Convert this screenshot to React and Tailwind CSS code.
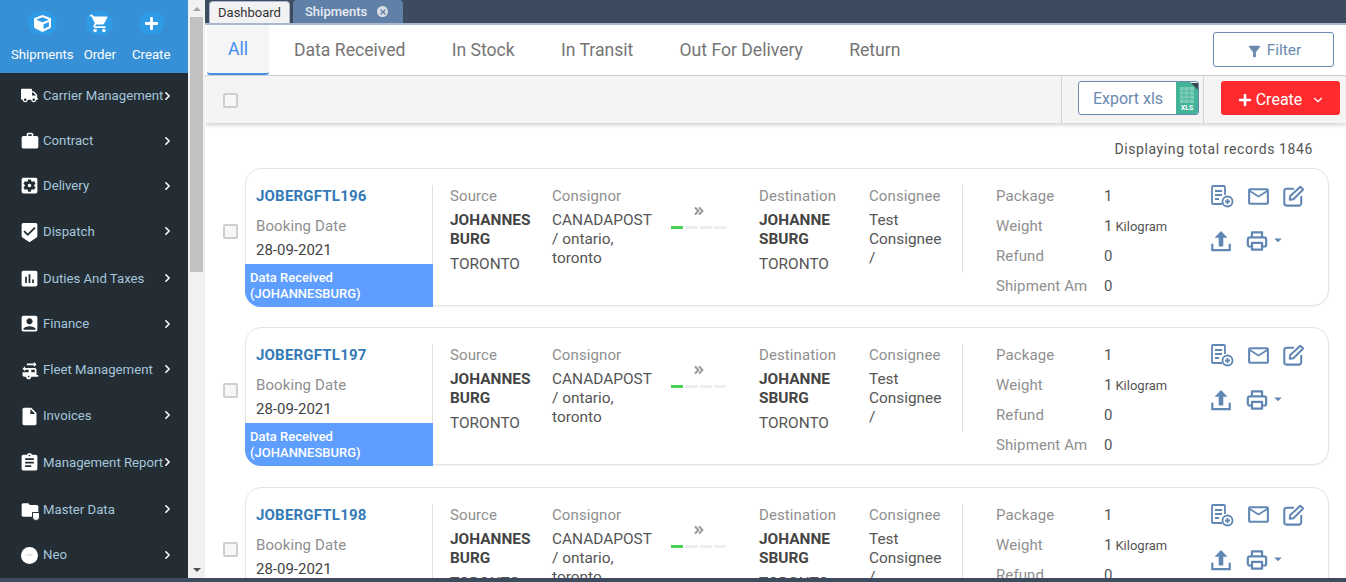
import React from "react";
import { ChevronRight, ChevronDown, ChevronsRight, X } from "lucide-react";
import {
  MdWork,
  MdSettingsApplications,
  MdAssessment,
  MdAccountBox,
  MdInsertDriveFile,
  MdAssignment,
  MdShoppingCart,
  MdMailOutline,
  MdArrowDropDown,
  MdFolder,
  MdBeenhere,
  MdRvHookup,
  MdFilterAlt,
} from "react-icons/md";
import { FaCube, FaPlus, FaTruck } from "react-icons/fa";

const menu = [
  { label: "Carrier Management", icon: <FaTruck size={17} />, h: "h-[45px]" },
  { label: "Contract", icon: <MdWork size={20} />, h: "h-[45px]" },
  { label: "Delivery", icon: <MdSettingsApplications size={21} />, h: "h-[45px]" },
  { label: "Dispatch", icon: <MdBeenhere size={21} />, h: "h-[46px] pt-[2px]" },
  { label: "Duties And Taxes", icon: <MdAssessment size={21} />, h: "h-[47px] pt-[2px]" },
  { label: "Finance", icon: <MdAccountBox size={21} />, h: "h-[45px]" },
  { label: "Fleet Management", icon: <MdRvHookup size={21} />, h: "h-[46px] pt-[2px]" },
  { label: "Invoices", icon: <MdInsertDriveFile size={21} />, h: "h-[46px] pt-[2px]" },
  { label: "Management Report", icon: <MdAssignment size={21} />, h: "h-[47px] pt-[2px]" },
  {
    label: "Master Data",
    icon: (
      <span className="relative flex">
        <MdFolder size={20} />
        <span className="absolute -bottom-[1px] right-0 h-[9px] w-[8px] rounded-b-[4px] border border-[#232d33] bg-white" />
      </span>
    ),
    h: "h-[47px] pt-[2px]",
  },
  {
    label: "Neo",
    icon: (
      <span className="flex h-[17px] w-[17px] items-center justify-center rounded-full bg-white text-[4px] text-[#cfc4cf]">
        neo
      </span>
    ),
    h: "h-[46px]",
  },
];

const tabs = ["All", "Data Received", "In Stock", "In Transit", "Out For Delivery", "Return"];

const shipments = ["JOBERGFTL196", "JOBERGFTL197", "JOBERGFTL198"];

function TopAction({ icon, label, circle }) {
  return (
    <div className="flex flex-col items-center gap-[12px]">
      <div className={`flex h-[24px] items-center justify-center rounded-full bg-[#2f9be6] text-white ${circle}`}>
        {icon}
      </div>
      <span className="text-[13.2px] leading-[16px] text-white">{label}</span>
    </div>
  );
}

function Sidebar() {
  return (
    <aside className="flex w-[188px] shrink-0 flex-col bg-[#232d33]">
      <div className="flex h-[73px] bg-[#3790d6] pl-[11px] pt-[11px]">
        <TopAction icon={<FaCube size={17} />} label="Shipments" circle="w-[29px]" />
        <div className="ml-[10px]">
          <TopAction icon={<MdShoppingCart size={21} />} label="Order" circle="w-[27px]" />
        </div>
        <div className="ml-[16px]">
          <TopAction icon={<FaPlus size={15} />} label="Create" circle="w-[25px]" />
        </div>
      </div>
      {menu.map((item) => (
        <div key={item.label} className={`relative flex items-center pl-[18px] ${item.h}`}>
          <span className="-ml-[1px] mr-[1px] flex w-[25px] justify-center text-white">{item.icon}</span>
          <span className="whitespace-nowrap text-[13.2px] text-[#a6c6dc]">{item.label}</span>
          <ChevronRight size={13} strokeWidth={3} className="absolute left-[161px] top-1/2 -translate-y-1/2 text-white" />
        </div>
      ))}
    </aside>
  );
}

function Scrollbar() {
  return (
    <div className="flex w-[17px] shrink-0 flex-col items-center bg-[#f1f1f1]">
      <div className="flex h-[17px] items-center justify-center">
        <div className="h-0 w-0 border-x-[4px] border-b-[4px] border-x-transparent border-b-[#a3a3a3]" />
      </div>
      <div className="h-[255px] w-[13px] bg-[#c1c1c1]" />
      <div className="flex-1" />
      <div className="flex h-[17px] items-center justify-center">
        <div className="h-0 w-0 border-x-[4px] border-t-[4px] border-x-transparent border-t-[#505050]" />
      </div>
    </div>
  );
}

function Checkbox() {
  return <div className="h-[15px] w-[15px] shrink-0 rounded-[2px] border-2 border-[#cfcfcf] bg-[#f7f7f7]" />;
}

function TabStrip() {
  return (
    <div className="flex h-[25px] shrink-0 items-end gap-[3px] border-b-2 border-[#a9b7d1] bg-[#3d4b5e] pl-[4px]">
      <div className="flex h-[22px] w-[81px] items-center justify-center rounded-t-[4px] border border-b-0 border-[#a9b7d1] bg-[#f2f2f2] text-[13px] text-[#333]">
        Dashboard
      </div>
      <div className="flex h-[23px] w-[110px] items-center gap-[10px] rounded-t-[4px] bg-[#6080a8] pl-[12px] text-[13px] font-medium text-[#e8edf4]">
        Shipments
        <span className="flex h-[11px] w-[11px] items-center justify-center rounded-full bg-[#d9dde3]">
          <X size={8} strokeWidth={4} className="text-[#6080a8]" />
        </span>
      </div>
    </div>
  );
}

function NavTabs() {
  return (
    <div className="flex h-[51px] shrink-0 items-stretch border-b border-[#d4d4d4] bg-white pl-[2px] pr-[12px]">
      {tabs.map((tab, i) => (
        <div
          key={tab}
          className={
            i === 0
              ? "flex w-[62px] items-center justify-center rounded-b-[3px] border-b-2 border-[#4a90e2] bg-[#f5f5f5] text-[17.6px] text-[#3f8cf0]"
              : "ml-[25px] mr-[21.2px] flex items-center whitespace-nowrap text-[17.6px] text-[#757575]"
          }
        >
          {tab}
        </div>
      ))}
      <div className="flex-1" />
      <div className="mt-[7px] flex h-[35px] w-[121px] items-center justify-center gap-[4px] rounded-[3px] border border-[#6a8ab0] pt-[3px] text-[15.5px] text-[#6a8ab0]">
        <MdFilterAlt size={17} />
        Filter
      </div>
    </div>
  );
}

function XlsBadge() {
  return (
    <span className="relative flex h-[32px] w-[22px] shrink-0 items-end justify-center bg-[#43b39a] pb-[2px] text-[7px] font-bold leading-none text-white">
      <svg viewBox="0 0 22 32" width="22" height="32" className="absolute left-0 top-0">
        <path d="M4 5h14v16H4z" fill="#7fcdb9" />
        <path d="M4 9h14M4 13h14M4 17h14M8 5v16M13 5v16" stroke="#43b39a" strokeWidth="0.8" />
        <path d="M14 0h8v8z" fill="#3a4a50" />
        <path d="M14 0h8v1h-7z" fill="#ffffff" />
      </svg>
      <span className="relative">XLS</span>
    </span>
  );
}

function Toolbar() {
  return (
    <div className="flex h-[47px] shrink-0 items-center bg-[#f4f4f4] pl-[18px] shadow-[0_2px_4px_rgba(0,0,0,0.18)]">
      <div className="mt-[2px]">
        <Checkbox />
      </div>
      <div className="flex-1" />
      <div className="flex h-full items-center border-x border-[#d4d4d4] pl-[16px] pr-[4px]">
        <div className="-mt-[3px] flex h-[34px] w-[121px] items-center overflow-hidden rounded-[3px] border border-[#6a8ab0] bg-white">
          <span className="flex-1 pl-[1px] pt-[2px] text-center text-[16px] text-[#6a8ab0]">Export xls</span>
          <XlsBadge />
        </div>
      </div>
      <div className="-mt-[3px] ml-[17px] mr-[6px] flex h-[34px] w-[119px] items-center justify-center gap-[4px] rounded-[3px] bg-[#ff2a2e] pl-[2px] pt-[3px] text-[16px] text-white">
        <FaPlus size={14} />
        Create
        <ChevronDown size={14} strokeWidth={2} className="ml-[5px]" />
      </div>
    </div>
  );
}

function Label({ children, className = "" }) {
  return <div className={`text-[15px] leading-[20px] tracking-[0.1px] text-[#8f8f8f] ${className}`}>{children}</div>;
}

function AddDocIcon() {
  return (
    <svg viewBox="0 0 24 24" width="24" height="24" fill="none" stroke="currentColor" strokeWidth="1.8">
      <path d="M12 20H3a1 1 0 0 1-1-1V3a1 1 0 0 1 1-1h11a1 1 0 0 1 1 1v8" />
      <path d="M5 7h7M5 11h7M5 15h4" />
      <circle cx="17.5" cy="17.5" r="5" />
      <path d="M17.5 15v5M15 17.5h5" />
    </svg>
  );
}

function EditIcon() {
  return (
    <svg viewBox="0 0 24 24" width="22" height="22" fill="none" stroke="currentColor" strokeWidth="2.2" strokeLinejoin="round">
      <path d="M13 4H5a2.5 2.5 0 0 0-2.5 2.5V20A2.5 2.5 0 0 0 5 22.500h13.500A2.500 2.500 0 0 0 21 20v-8" />
      <path d="M20 2l3 3L12.500 15.500 8.500 16l.5-4z" />
    </svg>
  );
}

function UploadIcon() {
  return (
    <svg viewBox="0 0 24 24" width="22" height="22" fill="currentColor">
      <path d="M12 1l7 7.500h-4.500V18h-5V8.500H5z" />
      <path d="M2.500 15v7h19v-7" fill="none" stroke="currentColor" strokeWidth="2.400" />
    </svg>
  );
}

function PrintIcon() {
  return (
    <svg viewBox="0 0 24 24" width="22" height="22" fill="none" stroke="currentColor" strokeWidth="2.400" strokeLinejoin="round">
      <path d="M6.500 8V2.500h11V8" />
      <path d="M6.500 18H4a2 2 0 0 1-2-2v-5.500A2.500 2.500 0 0 1 4.500 8h15a2.500 2.500 0 0 1 2.500 2.500V16a2 2 0 0 1-2 2h-2.500" />
      <path d="M6.500 14h11v7.500h-11z" />
    </svg>
  );
}

function ShipmentCard({ code }) {
  return (
    <div className="flex items-center pl-[18px]">
      <div className="-mt-[12px]">
        <Checkbox />
      </div>
      <div className="ml-[7px] flex h-[138px] w-[1084px] shrink-0 rounded-[16px] border border-[#e4e4e4] bg-white shadow-[0_1px_2px_rgba(0,0,0,0.05)]">
        <div className="-mb-[2px] -ml-[1px] flex w-[188px] shrink-0 flex-col">
          <div className="mt-[16px] flex-1 border-r border-[#e0e0e0] pl-[11px] pt-[1px]">
            <div className="text-[15px] font-bold leading-[20px] tracking-[0.2px] text-[#337ab7]">{code}</div>
            <Label className="mt-[10px]">Booking Date</Label>
            <div className="mt-[4px] text-[15px] leading-[20px] text-[#444]">28-09-2021</div>
          </div>
          <div className="h-[43px] rounded-bl-[16px] bg-[#5e9eff] pl-[5px] pt-[6px] text-[13px] font-medium leading-[16px] text-white">
            Data Received
            <br />
            (JOHANNESBURG)
          </div>
        </div>

        <div className="flex w-[530px] shrink-0 pb-[32px] pl-[1px] pt-[16px]">
          <div className="w-[118px] shrink-0 pl-[16px] pt-[1px]">
            <Label>Source</Label>
            <div className="mt-[5px] text-[15.4px] font-bold leading-[19px] text-[#444]">JOHANNES<br />BURG</div>
            <div className="mt-[5px] text-[15.4px] leading-[20px] text-[#555]">TORONTO</div>
          </div>
          <div className="w-[119px] shrink-0 pt-[1px]">
            <Label>Consignor</Label>
            <div className="mt-[5px] text-[15.4px] leading-[19px] text-[#555]">CANADAPOST<br />/ ontario,<br />toronto</div>
          </div>
          <div className="w-[88px] shrink-0 pt-[19px]">
            <div className="flex w-[55px] justify-center text-[#9a9a9a]">
              <ChevronsRight size={14} strokeWidth={3.5} />
            </div>
            <div className="mt-[8px] flex w-[55px] gap-[2px]">
              <div className="h-[3px] flex-1 bg-[#4cd05a]" />
              <div className="h-[3px] flex-1 bg-[#eeeeee]" />
              <div className="h-[3px] flex-1 bg-[#eeeeee]" />
              <div className="h-[3px] flex-1 bg-[#eeeeee]" />
            </div>
          </div>
          <div className="w-[110px] shrink-0 pt-[1px]">
            <Label>Destination</Label>
            <div className="mt-[5px] text-[15.4px] font-bold leading-[19px] text-[#444]">JOHANNE<br />SBURG</div>
            <div className="mt-[5px] text-[15.4px] leading-[20px] text-[#555]">TORONTO</div>
          </div>
          <div className="flex-1 border-r border-[#e0e0e0] pt-[1px]">
            <Label>Consignee</Label>
            <div className="mt-[5px] text-[15.4px] leading-[19px] text-[#555]">Test<br />Consignee<br />/</div>
          </div>
        </div>

        <div className="flex w-[247px] shrink-0 flex-col gap-[10px] pl-[33px] pt-[17px]">
          {[["Package", "1"], ["Weight", "1"], ["Refund", "0"], ["Shipment Amount", "0"]].map(([name, value]) => (
            <div key={name} className="flex h-[20px]">
              <Label className="w-[91px] shrink-0 overflow-hidden whitespace-nowrap">{name}</Label>
              <div className="ml-[17px] flex items-baseline text-[15px] leading-[20px] text-[#555]">
                {value}
                {name === "Weight" && <span className="ml-[3px] text-[13px]">Kilogram</span>}
              </div>
            </div>
          ))}
        </div>

        <div className="flex flex-col gap-[21px] pt-[15px] text-[#6086b4]">
          <div className="flex h-[24px] items-center gap-[12px]">
            <AddDocIcon />
            <MdMailOutline size={25} />
            <span className="-ml-[1px]">
              <EditIcon />
            </span>
          </div>
          <div className="flex h-[24px] items-center gap-[14px]">
            <UploadIcon />
            <span className="flex items-center">
              <PrintIcon />
              <MdArrowDropDown size={18} className="ml-[1px] -mt-[2px]" />
            </span>
          </div>
        </div>
      </div>
    </div>
  );
}

export default function App() {
  return (
    <div className="flex h-[582px] w-[1346px] flex-col overflow-hidden bg-[#3d4b5e] font-['Roboto',sans-serif]">
      <div className="flex h-[578px]">
        <Sidebar />
        <Scrollbar />
        <div className="flex min-w-0 flex-1 flex-col overflow-hidden bg-white">
          <TabStrip />
          <NavTabs />
          <Toolbar />
          <div className="flex-1 overflow-hidden">
            <div className="pr-[33px] pt-[16px] text-right text-[14px] leading-[20px] tracking-[0.6px] text-[#555]">
              Displaying total records 1846
            </div>
            <div className="mt-[9px] flex flex-col gap-[21.4px]">
              {shipments.map((code) => (
                <ShipmentCard key={code} code={code} />
              ))}
            </div>
          </div>
        </div>
      </div>
    </div>
  );
}
